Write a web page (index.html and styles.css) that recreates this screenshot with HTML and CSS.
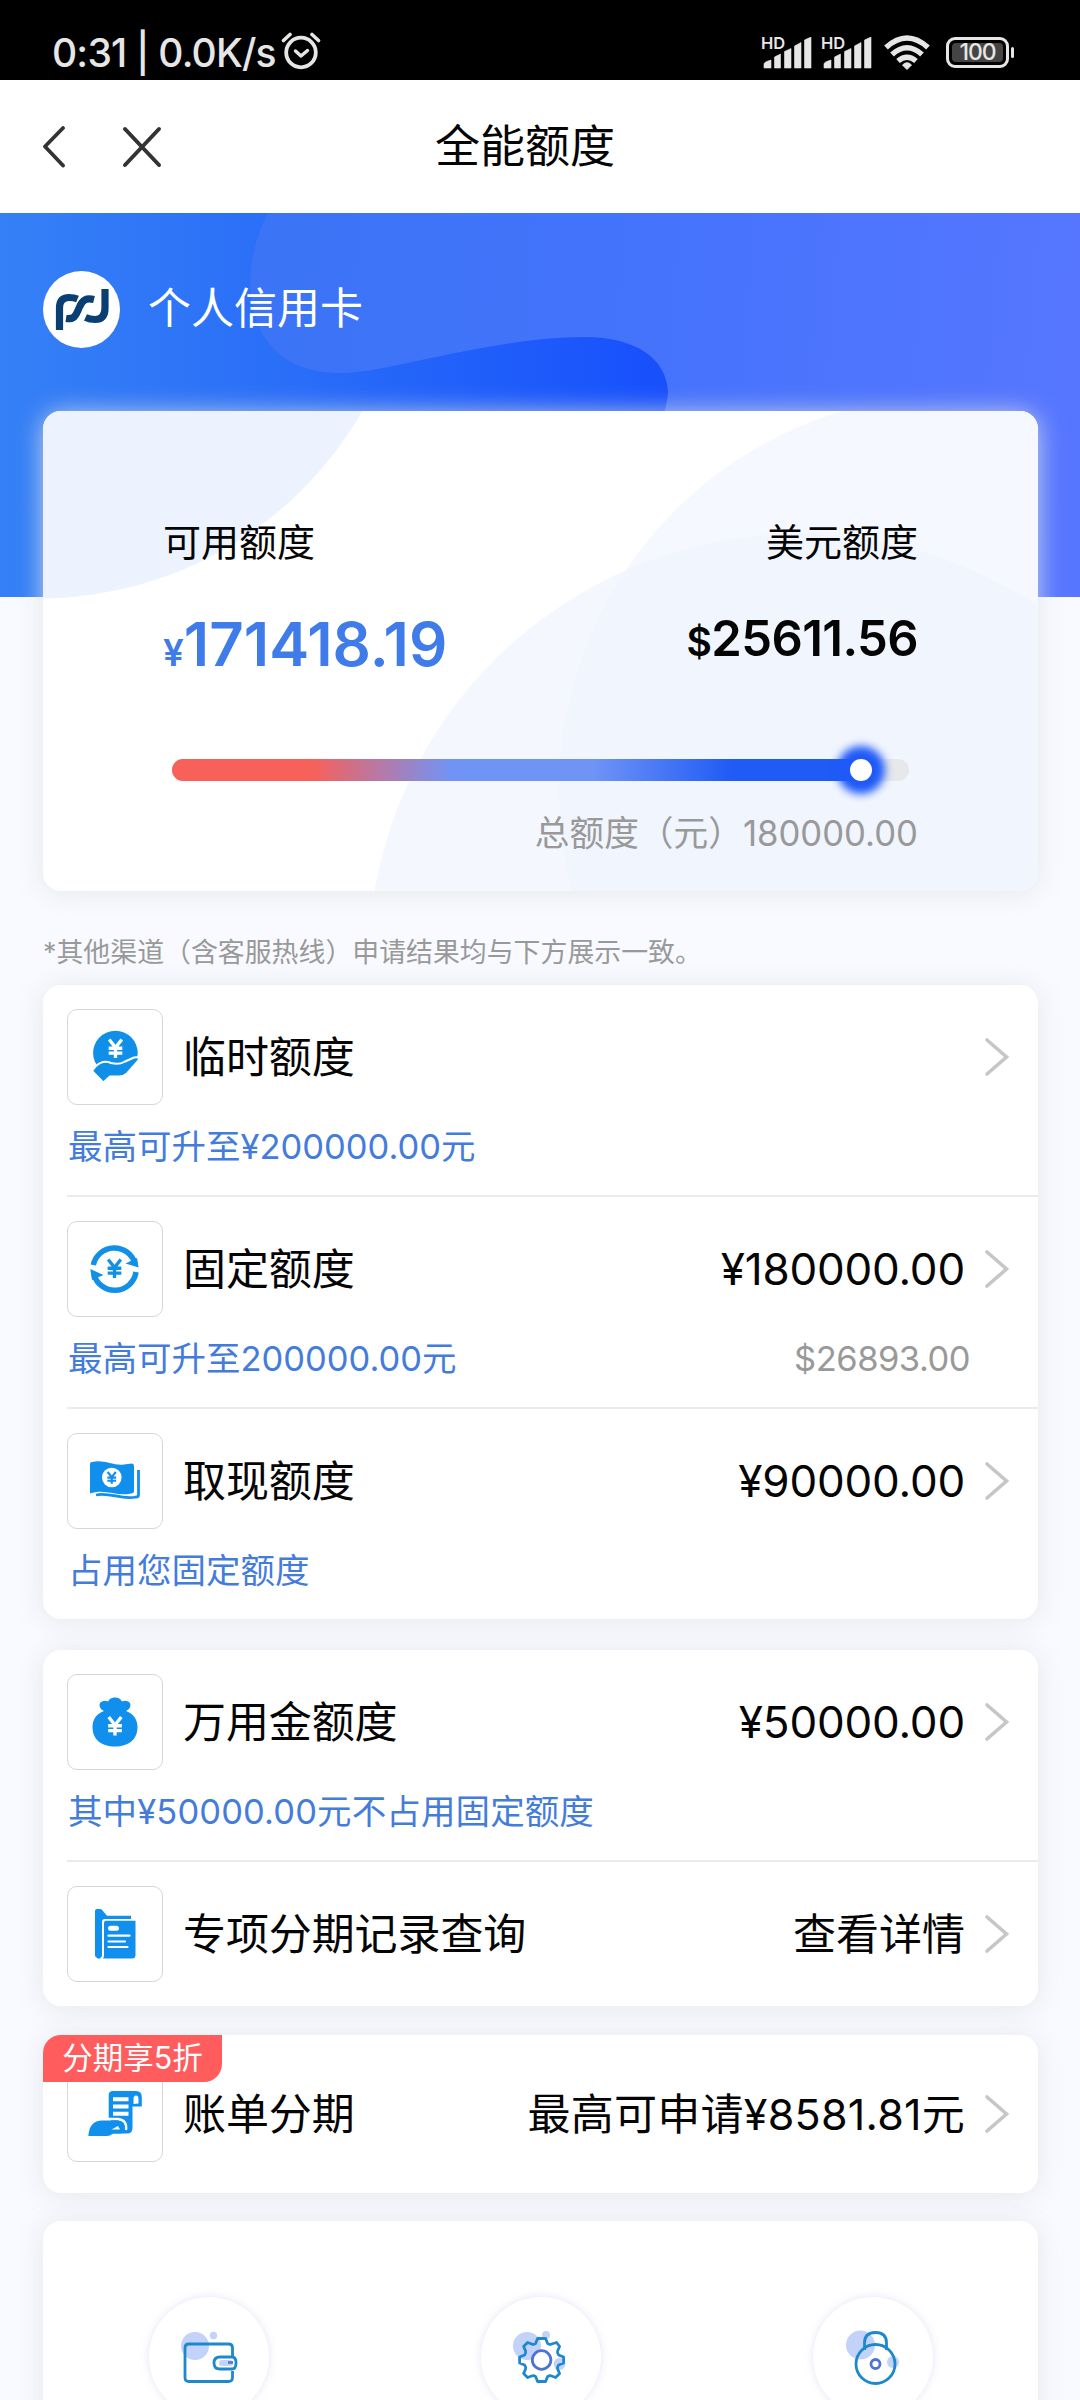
FILE: index.html
```html
<!DOCTYPE html>
<html lang="zh-CN">
<head>
<meta charset="utf-8">
<title>全能额度</title>
<link rel="stylesheet" href="styles.css">
</head>
<body>
<svg class="defs" aria-hidden="true">
  <symbol id="chevron" viewBox="0 0 26 40"><path d="M3 3 L22.500 20 L3 37" fill="none" stroke="#c6c6c6" stroke-width="3.6" stroke-linecap="round"/></symbol>
  <symbol id="yuan" viewBox="0 0 20 20"><path d="M4 1.5 L10 9 L16 1.5 M10 9 V19 M3.5 9.8 H16.5 M3.5 14.4 H16.5" fill="none" stroke="currentColor" stroke-width="3.2"/></symbol>
  <symbol id="bars" viewBox="0 0 50 32"><path d="M1 31 V27 Q1 25 8 23 V31 Z M11.500 31 V20 L17.500 17 V31 Z M21.500 31 V14.500 L28 11.500 V31 Z M31.500 31 V9 L38 5.500 V31 Z M41.500 31 V3 L48 0 V31 Z" fill="#e6e6e6" stroke="#e6e6e6" stroke-width=".6" stroke-linejoin="round"/></symbol>
</svg>

<header class="status">
  <span class="status-text">0:31 | 0.0K/s</span>
  <svg class="alarm" viewBox="0 0 40 40"><g fill="none" stroke="#e6e6e6" stroke-linecap="round" stroke-linejoin="round"><circle cx="20" cy="21.500" r="14.800" stroke-width="3.800"/><path d="M14.500 20 L20 25 L26.500 19.500" stroke-width="3.400"/><path d="M2.500 9.500 L9 3.500 M37.500 9.500 L31 3.500" stroke-width="3.600"/></g></svg>
  <div class="status-right">
    <div class="signal"><span class="hd">HD</span><svg class="bars"><use href="#bars"/></svg></div>
    <div class="signal"><span class="hd">HD</span><svg class="bars"><use href="#bars"/></svg></div>
    <svg class="wifi" viewBox="0 0 46 36"><g fill="none" stroke="#e6e6e6" stroke-width="5.500"><path d="M2 12.500 Q23 -6.500 44 12.500"/><path d="M8 19.500 Q23 6 38 19.500"/><path d="M14 26 Q23 18.500 32 26"/></g><path d="M23 34.500 L18.500 30 Q23 25.500 27.500 30 Z" fill="#e6e6e6" stroke="#e6e6e6" stroke-width="1"/></svg>
    <div class="battery"><span class="battery-level">100</span></div>
  </div>
</header>

<nav class="nav">
  <svg class="nav-back" viewBox="0 0 24 42"><path d="M21 2 L3 20.500 L21 39.500" fill="none" stroke="#333" stroke-width="3.800" stroke-linecap="round" stroke-linejoin="round"/></svg>
  <svg class="nav-close" viewBox="0 0 40 42"><path d="M3 3 L37 39 M37 3 L3 39" fill="none" stroke="#333" stroke-width="4" stroke-linecap="round"/></svg>
  <h1 class="nav-title">全能额度</h1>
</nav>

<main class="page">
  <section class="hero">
    <svg class="hero-bg" viewBox="0 0 1080 384">
      <defs>
        <linearGradient id="deep" gradientUnits="userSpaceOnUse" x1="0" y1="0" x2="670" y2="0"><stop offset="0" stop-color="#3580f6"/><stop offset=".45" stop-color="#296df8"/><stop offset="1" stop-color="#174ffc"/></linearGradient>
        <linearGradient id="light" gradientUnits="userSpaceOnUse" x1="240" y1="0" x2="1080" y2="60"><stop offset="0" stop-color="#3a74f5"/><stop offset=".5" stop-color="#4573fc"/><stop offset="1" stop-color="#5676ff"/></linearGradient>
      </defs>
      <path d="M0 0H1080V384H0Z" fill="url(#deep)"/>
      <path d="M268 0 C249 35 243 85 262 120 C279 150 308 161 346 160 C395 157 495 124 585 124 C635 124 666 145 668 178 C668 190 662 205 657 230 L640 384 H1080 V0 Z" fill="url(#light)"/>
    </svg>
    <div class="owner">
      <svg class="logo" viewBox="0 0 77 77"><circle cx="38.500" cy="38.500" r="38.500" fill="#fff"/><g fill="none" stroke="#093f73" stroke-width="7.200"><path d="M16.500 59 V37 Q16.500 26.500 26 26.500 Q31 26.500 34.500 28"/><path d="M23 47.500 C33 49 33.500 42 36.500 36 C39.500 29 43 26.500 51 28.500"/><path d="M62 18 V37 Q62 48.500 52 48.500 Q47 48.500 42.500 46.500"/></g></svg>
      <span class="owner-name">个人信用卡</span>
    </div>
  </section>

  <section class="card summary">
    <svg class="summary-bg" viewBox="0 0 995 480">
      <defs><clipPath id="lower"><circle cx="756" cy="554" r="431"/></clipPath></defs>
      <circle cx="-4" cy="-185" r="372.500" fill="#ecf2fe"/>
      <circle cx="756" cy="554" r="431" fill="#f4f7fe"/>
      <circle cx="911" cy="379" r="395" fill="#f5f8fe"/>
      <circle cx="911" cy="379" r="395" fill="#f1f5fd" clip-path="url(#lower)"/>
    </svg>
    <div class="summary-cols">
      <div class="col">
        <div class="col-label">可用额度</div>
        <div class="cny"><span class="cny-sign">¥</span>171418.19</div>
      </div>
      <div class="col col-right">
        <div class="col-label">美元额度</div>
        <div class="usd"><span class="usd-sign">$</span>25611.56</div>
      </div>
    </div>
    <div class="track"><div class="fill"><i class="knob"></i></div></div>
    <div class="total">总额度（元）<span class="total-num">180000.00</span></div>
  </section>

  <p class="note">*其他渠道（含客服热线）申请结果均与下方展示一致。</p>

  <section class="card list">
    <div class="row">
      <div class="row-main">
        <div class="icon-box"><svg viewBox="0 0 96 96"><circle cx="48.400" cy="44" r="22.300" fill="#108fe9"/><path d="M25 62 L29 57 Q36 50.500 44 54 Q52 56 57 53 L67 48.500 Q74 47 71 52 L60 64.500 Q57 67.500 52 67.500 H43 L36.300 73.500 Z" fill="#108fe9" stroke="#fff" stroke-width="2"/><use href="#yuan" x="38" y="28.500" width="21" height="22" color="#fff"/></svg></div>
        <span class="row-title">临时额度</span>
        <svg class="chevron"><use href="#chevron"/></svg>
      </div>
      <div class="row-sub"><span class="hint">最高可升至¥200000.00元</span></div>
    </div>
    <div class="row">
      <div class="row-main">
        <div class="icon-box"><svg viewBox="0 0 96 96"><g fill="none" stroke="#1290e6" stroke-width="5.500"><path d="M26.300 44 A21.500 21.500 0 0 1 68 42.500"/><path d="M69 51 A21.500 21.500 0 0 1 27 53.500"/></g><path d="M58.500 42.500 L71.600 46.500 L70 37 Z M36.500 54 L23.300 48 L25 59 Z" fill="#1290e6"/><use href="#yuan" x="37" y="36.500" width="21" height="22" color="#1290e6"/></svg></div>
        <span class="row-title">固定额度</span>
        <span class="row-value num">¥180000.00</span>
        <svg class="chevron"><use href="#chevron"/></svg>
      </div>
      <div class="row-sub"><span class="hint">最高可升至200000.00元</span><span class="sub-value">$26893.00</span></div>
    </div>
    <div class="row">
      <div class="row-main">
        <div class="icon-box"><svg viewBox="0 0 96 96"><path d="M23 31 Q23 29 25 29 C37 26 46 33 57 31.500 L65 30.500 Q67 30.500 67 33 V58 Q67 60 64 60.500 C50 64 38 55 23 60.500 Z" fill="#108fec"/><path d="M71.500 37 V62 Q71.500 64 69 64 C54 67 43 59 29 62" fill="none" stroke="#108fec" stroke-width="2.800"/><circle cx="44.800" cy="44.500" r="9.800" fill="#fff"/><use href="#yuan" x="38" y="38" width="13.500" height="13.500" color="#108fec"/></svg></div>
        <span class="row-title">取现额度</span>
        <span class="row-value num">¥90000.00</span>
        <svg class="chevron"><use href="#chevron"/></svg>
      </div>
      <div class="row-sub"><span class="hint">占用您固定额度</span></div>
    </div>
  </section>

  <section class="card list list-second">
    <div class="row">
      <div class="row-main">
        <div class="icon-box"><svg viewBox="0 0 96 96"><path d="M37 37 C32 35 31 29 35 27.500 Q38 26 41 27.500 Q43 23.500 48 23.500 Q53 23.500 55 27.500 Q58 26 61 27.500 C65 29 64 35 59 37 C67 40 70.500 46 70.500 53 C70.500 66 61 72.500 48 72.500 C35 72.500 25.500 66 25.500 53 C25.500 46 29 40 37 37 Z" fill="#108fec"/><use href="#yuan" x="37.500" y="41.500" width="21" height="21" color="#fff"/></svg></div>
        <span class="row-title">万用金额度</span>
        <span class="row-value num">¥50000.00</span>
        <svg class="chevron"><use href="#chevron"/></svg>
      </div>
      <div class="row-sub"><span class="hint hint-wide">其中¥50000.00元不占用固定额度</span></div>
    </div>
    <div class="row row-single">
      <div class="row-main">
        <div class="icon-box"><svg viewBox="0 0 96 96"><path d="M28 25 Q28 23 30 23 H33 Q35 23 36 25 L40 29.700 H64 V33 H38 Q35 33 35 36 V70 Q33 74 30 72 L28 70 Z" fill="#108fec"/><path d="M37 37 Q37 34.700 39 34.700 H68.500 V69 Q68.500 72.500 65 72.500 H36 Q37 71 37 69 Z" fill="#108fec"/><path d="M43.500 42.300 H49.500" stroke="#fff" stroke-width="5" stroke-linecap="round"/><path d="M41.500 49.700 H62.500 M41.500 55.500 H58 M41.500 61 H60.500" stroke="#fff" stroke-width="2.200" stroke-linecap="round"/></svg></div>
        <span class="row-title">专项分期记录查询</span>
        <span class="row-value">查看详情</span>
        <svg class="chevron"><use href="#chevron"/></svg>
      </div>
    </div>
  </section>

  <section class="card list bill">
    <span class="badge">分期享5折</span>
    <div class="row-main">
      <div class="icon-box"><svg viewBox="0 0 96 96"><path d="M41.700 53 V29 Q41.700 25 46 25 H69 Q74.800 25 74.800 31 V40.500 H65.500 V62 Q65.500 67.500 60 67.500 H44 V53 Z" fill="#108fec"/><path d="M66.500 38 V33 Q66.500 29.500 69 29.500 Q71.500 29.500 71.500 33 V37.500 Z" fill="#fff"/><path d="M46 33.300 H61.500 M46 40.500 H61.500 M46 47.800 H61.500" stroke="#fff" stroke-width="4"/><path d="M34 53 H51 Q60.500 54 59 64" fill="none" stroke="#fff" stroke-width="2.400"/><path d="M21.300 70 Q22.500 54.500 35 54.500 H50 Q57 55.500 57.500 63 Q57.500 67.500 53 67.500 H46 Q43 70 40 70 Z" fill="#108fec"/><path d="M44.500 63.500 L51 60 L53 63.500 Z" fill="#fff"/></svg></div>
      <span class="row-title">账单分期</span>
      <span class="row-value bill-value">最高可申请¥8581.81元</span>
      <svg class="chevron"><use href="#chevron"/></svg>
    </div>
  </section>

  <section class="card tools">
    <div class="tool"><svg viewBox="0 0 120 120"><circle cx="46" cy="49" r="14" fill="#c3d2f8"/><circle cx="64.500" cy="38.500" r="3.700" fill="#c3d2f8"/><path d="M83.500 59 V51 Q83.500 47 79.500 47 H40 Q36 47 36 51 V80.500 Q36 84.500 40 84.500 H79.500 Q83.500 84.500 83.500 80.500 V74" fill="none" stroke="#1e88cd" stroke-width="2.800"/><path d="M65 66 Q65 60 71 60 H83 Q87 60 87 66 Q87 72 83 72 H71 Q65 72 65 66 Z" fill="#fff" stroke="#1e88cd" stroke-width="2.800"/><path d="M73 66 H81" stroke="#c3d2f8" stroke-width="6" stroke-linecap="round"/><path d="M79 65.500 H84" stroke="#4f73d0" stroke-width="2.600"/></svg></div>
    <div class="tool"><svg viewBox="0 0 120 120"><circle cx="46" cy="49" r="14" fill="#c3d2f8"/><circle cx="65" cy="38" r="4" fill="#c3d2f8"/><circle cx="78.500" cy="67" r="6" fill="#c3d2f8"/><path transform="translate(60.600 63)" d="M-4 -21.500 H4 L6 -16.500 Q8 -15 10 -16 L15 -17.500 L18 -13.500 L16 -9 Q15.500 -7 17 -5 L22 -3 V3 L17 5 Q15.500 7 16 9 L18 13.500 L14 17.500 L10 16 Q8 15 6 16.500 L4 21.500 H-4 L-6 16.500 Q-8 15 -10 16 L-14 17.500 L-18 13.500 L-16 9 Q-15.500 7 -17 5 L-22 3 V-3 L-17 -5 Q-15.500 -7 -16 -9 L-18 -13.500 L-14 -17.500 L-10 -16 Q-8 -15 -6 -16.500 Z" fill="none" stroke="#1e88cd" stroke-width="2.800" stroke-linejoin="round"/><circle cx="60.600" cy="63" r="9.300" fill="#fff" stroke="#4f73d0" stroke-width="2.800"/></svg></div>
    <div class="tool"><svg viewBox="0 0 120 120"><circle cx="47.500" cy="48" r="14.500" fill="#c3d2f8"/><circle cx="80" cy="65" r="6" fill="#c3d2f8"/><path d="M51.500 53 V46 Q51.500 35.500 62.500 35.500 Q73.500 35.500 73.500 46 V53" fill="none" stroke="#1e88cd" stroke-width="2.800"/><circle cx="62.500" cy="67" r="19.500" fill="none" stroke="#1e88cd" stroke-width="2.800"/><circle cx="62.500" cy="67" r="4.500" fill="#fff" stroke="#4f73d0" stroke-width="2.800"/></svg></div>
  </section>
</main>
</body>
</html>
```
FILE: styles.css
```css
* { box-sizing: border-box; }

html { overflow: hidden; }

body {
  margin: 0;
  width: 1080px;
  height: 2400px;
  overflow: hidden;
  background: #f8faff;
  color: #050505;
  font-family: Inter, "Noto Sans CJK SC", sans-serif;
}

.defs { position: absolute; width: 0; height: 0; }

/* Status bar */
.status {
  display: flex;
  align-items: center;
  height: 80px;
  padding: 25px 71px 0 52px;
  background: #000;
  color: #e6e6e6;
}
.status-text { width: 229px; font-size: 39px; line-height: 48px; font-weight: 500; white-space: nowrap; letter-spacing: -.8px; }
.alarm { width: 40px; height: 40px; margin-bottom: 4px; }
.status-right { display: flex; align-items: center; margin-left: auto; height: 55px; }
.signal { position: relative; width: 60px; height: 32px; }
.bars { display: block; width: 50px; height: 32px; margin-left: 2px; }
.hd { position: absolute; left: 0; top: -4px; font-size: 16.5px; line-height: 20px; font-weight: 600; }
.wifi { width: 46px; height: 36px; margin-left: 3px; }
.battery {
  position: relative;
  width: 63px;
  height: 31px;
  margin-left: 16px;
  padding: 3px;
  border: 3px solid #e6e6e6;
  border-radius: 9px;
}
.battery::after {
  content: "";
  position: absolute;
  right: -8px;
  top: 7px;
  width: 3px;
  height: 11px;
  border-radius: 2px;
  background: #e6e6e6;
}
.battery-level {
  display: block;
  height: 19px;
  border-radius: 4px;
  background: #444;
  font-size: 23px;
  line-height: 19px;
  font-weight: 500;
  text-align: center;
  letter-spacing: -1px;
}

/* Title bar */
.nav {
  display: grid;
  grid-template-columns: 24px 40px 1fr;
  column-gap: 56px;
  align-items: center;
  height: 133px;
  padding-left: 42px;
  background: #fff;
}
.nav-back { width: 24px; height: 42px; }
.nav-close { width: 40px; height: 42px; }
.nav-title { margin: 0; font-size: 45px; font-weight: 400; line-height: 60px; padding-left: 217px; white-space: nowrap; }

/* Hero */
.hero { position: relative; height: 384px; padding: 58px 43px 0; }
.hero-bg { position: absolute; inset: 0; width: 1080px; height: 384px; }
.owner { position: relative; display: flex; align-items: center; gap: 28px; }
.logo { width: 77px; height: 77px; }
.owner-name { margin-bottom: 3px; font-size: 43px; line-height: 60px; color: #fff; }

.card {
  position: relative;
  margin: 0 42px 0 43px;
  background: #fff;
  border-radius: 18px;
  box-shadow: 0 2px 26px rgba(226, 228, 230, .85);
}

/* Summary */
.summary { height: 480px; margin-top: -186px; padding: 106px 120px 0 120px; }
.summary-bg { position: absolute; inset: 0; width: 995px; height: 480px; border-radius: 18px; overflow: hidden; }
.summary-cols { position: relative; display: flex; justify-content: space-between; }
.col-right { text-align: right; }
.col-label { font-size: 38px; line-height: 50px; }
.cny { margin-top: 41px; height: 68px; font-size: 60px; line-height: 72px; font-weight: 600; color: #3f7be9; letter-spacing: 0; white-space: nowrap; }
.cny-sign { font-size: 37px; }
.usd { margin-top: 40px; height: 64px; font-size: 49px; line-height: 64px; font-weight: 600; letter-spacing: -.6px; white-space: nowrap; }
.usd-sign { font-size: 39px; }
.track { position: relative; width: 737px; height: 22px; margin: 83px 0 0 9px; border-radius: 11px; background: #e7e8ea; }
.fill {
  position: relative;
  width: 700px;
  height: 22px;
  border-radius: 11px;
  background: linear-gradient(90deg, #f8605a 20%, #7094f6 40%, #7094f6 60%, #205bf5 80%);
}
.knob { position: absolute; right: 0; top: 0; width: 22px; height: 22px; border-radius: 50%; background: #fff; box-shadow: 0 0 9px 13px #1f5af8; }
.total { position: relative; margin-top: 28px; font-size: 34.7px; line-height: 48px; color: #999; text-align: right; white-space: nowrap; }

.note { margin: 43px 43px 15px; height: 36px; font-size: 26.9px; line-height: 36px; color: #999; white-space: nowrap; }

/* Lists */
.row { height: 212px; padding-top: 24px; margin-left: 24px; border-bottom: 2px solid #ebebeb; }
.row:last-child { border-bottom: 0; }
.row-single { height: 144px; }
.row-main { display: flex; align-items: center; height: 96px; padding-right: 28px; }
.icon-box { flex: none; width: 96px; height: 96px; border: 1px solid #d6d6d6; border-radius: 10px; }
.icon-box svg { display: block; width: 96px; height: 96px; margin: -1px; }
.row-title { margin-left: 20px; font-size: 43px; line-height: 60px; white-space: nowrap; letter-spacing: -.1px; }
.row-value { margin-left: auto; font-size: 43px; line-height: 60px; white-space: nowrap; }
.num { font-size: 44px; letter-spacing: -.2px; }
.bill-value { letter-spacing: .25px; }
.chevron { flex: none; width: 26px; height: 40px; margin-left: 19px; }
.row-title + .chevron { margin-left: auto; }
.row-sub { display: flex; justify-content: space-between; height: 48px; margin-top: 18px; padding: 0 68px 0 1px; font-size: 34.5px; line-height: 48px; white-space: nowrap; }
.hint { color: #447cdb; }
.hint-wide { letter-spacing: .12px; }
.sub-value { color: #999; letter-spacing: -.5px; }
.list { height: 634px; }
.list-second { height: 356px; margin-top: 31px; }
.bill { height: 158px; margin-top: 29px; padding: 31px 0 0 24px; }
.badge {
  position: absolute;
  left: 0;
  top: 0;
  width: 179px;
  height: 47px;
  border-radius: 18px 0 18px 0;
  background: #ff5c5d;
  color: #fff;
  font-size: 30.5px;
  line-height: 46px;
  text-align: center;
  white-space: nowrap;
  z-index: 1;
}

/* Tools */
.tools { display: flex; justify-content: space-between; height: 240px; margin-top: 28px; padding: 76px 105px 0 106px; }
.tool { width: 120px; height: 120px; border-radius: 50%; background: #fff; box-shadow: 0 0 8px rgba(215, 218, 240, .7); }
.tool svg { display: block; width: 120px; height: 120px; }
```
